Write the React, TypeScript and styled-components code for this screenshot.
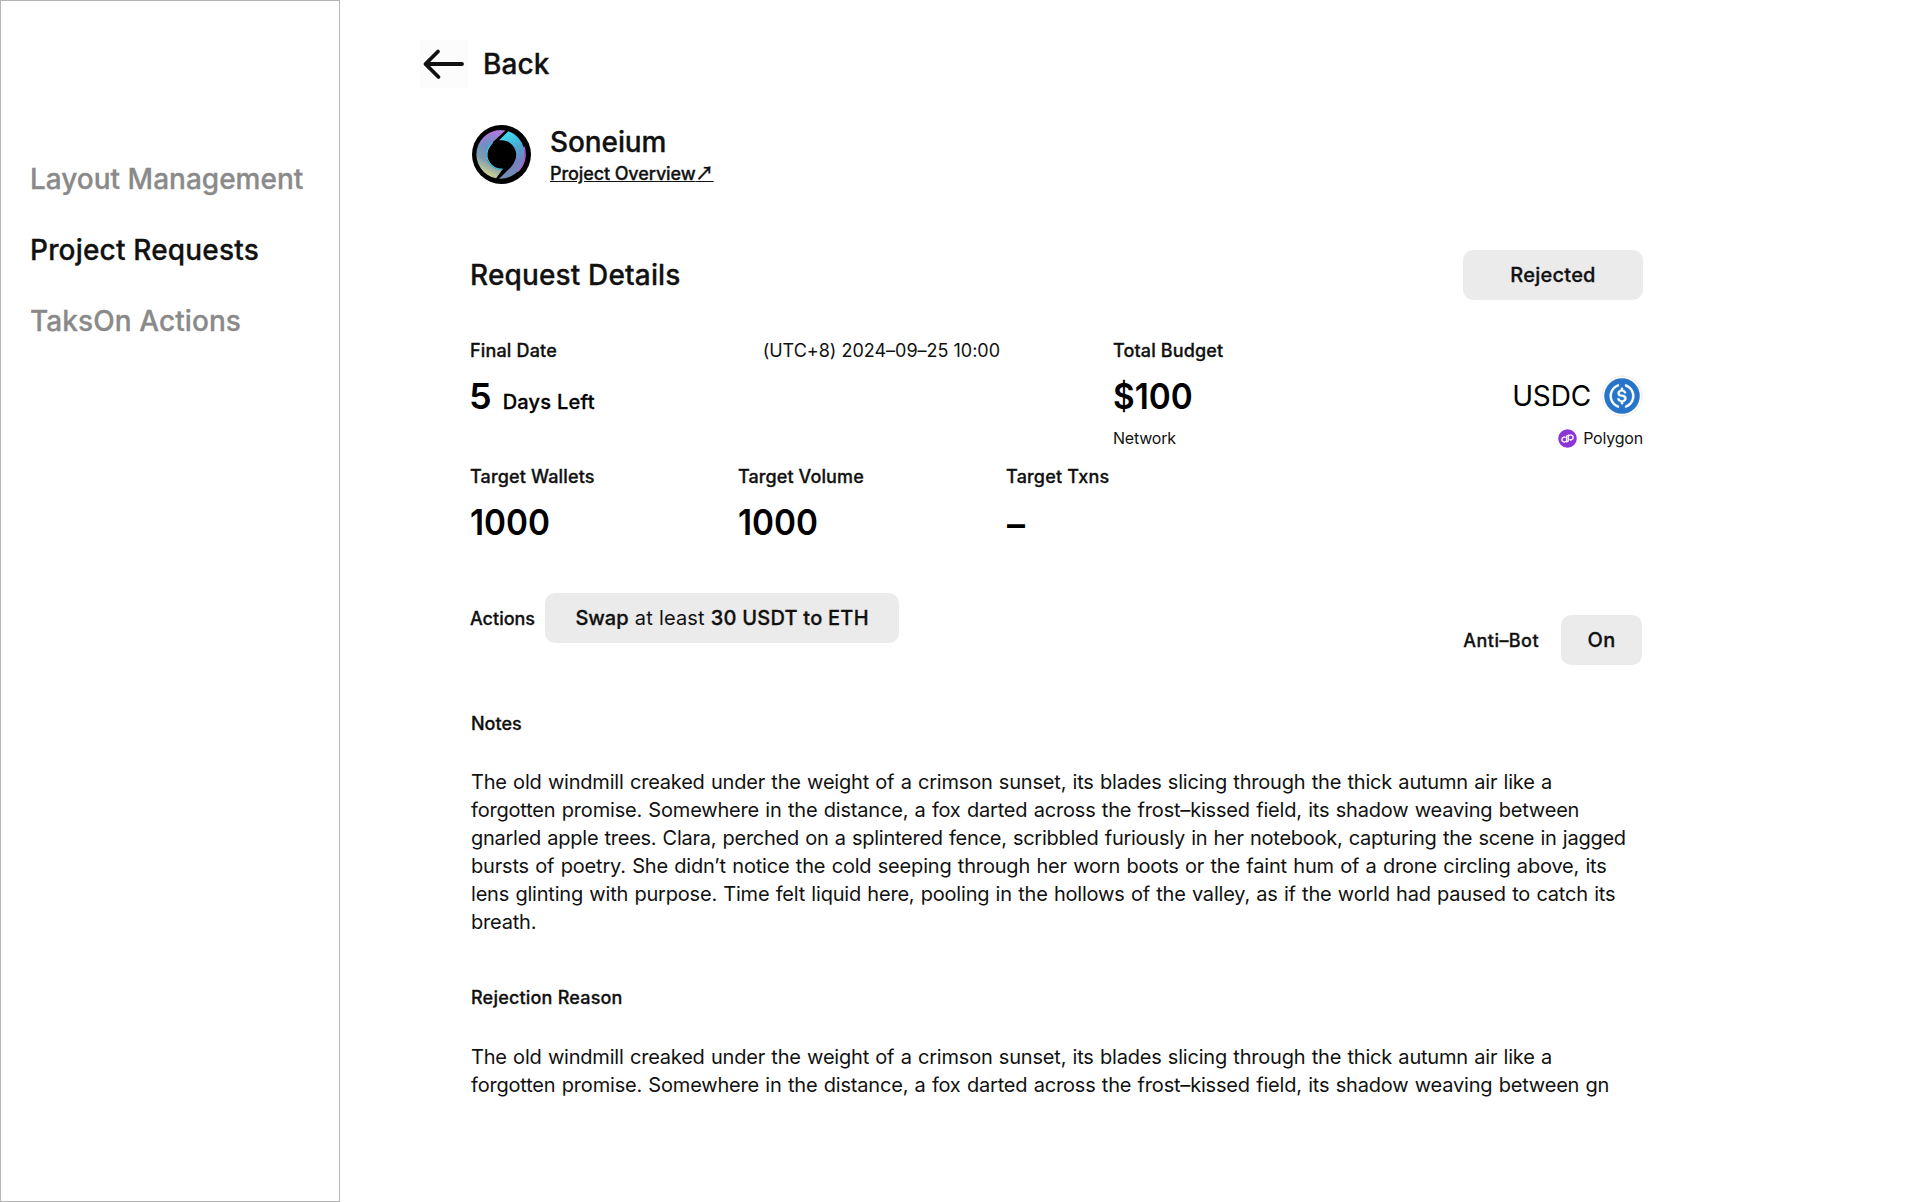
import React from 'react';
import styled, { createGlobalStyle, css } from 'styled-components';

const GlobalStyle = createGlobalStyle`
  * { box-sizing: border-box; }
  body { margin: 0; background: #fff; color: #111; font-family: Inter, "Liberation Sans", sans-serif; }
  h2, h3, p { margin: 0; }
`;

const medium = css`
  font-weight: 500;
  -webkit-text-stroke: 0.3px currentColor;
`;

interface Tracked {
  $track?: number;
}

const Page = styled.div`
  display: flex;
  min-height: 1202px;
`;

const Sidebar = styled.nav`
  width: 340px;
  flex: none;
  padding: 161px 0 0 29px;
  border: 1px solid #b5b5b5;
  display: flex;
  flex-direction: column;
  gap: 37px;
`;

const NavItem = styled.a<Tracked & { $active?: boolean }>`
  ${medium}
  align-self: flex-start;
  font-size: 28px;
  line-height: 34px;
  letter-spacing: ${(p) => p.$track ?? 0}px;
  color: ${(p) => (p.$active ? '#111' : '#8a8a8a')};
`;

const Main = styled.main`
  flex: 1;
  padding-top: 40px;
`;

const BackLink = styled.a`
  ${medium}
  display: flex;
  align-items: center;
  gap: 15px;
  margin-left: 80px;
  height: 48px;
  font-size: 28px;
  line-height: 34px;
  letter-spacing: 0.1px;
`;

const BackIcon = styled.svg`
  width: 48px;
  height: 48px;
  background: #fcfcfc;
`;

const Content = styled.section`
  width: 1173px;
  margin-left: 130px;
`;

const Project = styled.header`
  display: flex;
  gap: 18px;
  margin: 37px 0 0 2px;
`;

const ProjectText = styled.div`
  display: flex;
  flex-direction: column;
  align-items: flex-start;
  gap: 4px;
`;

const Heading = styled.h2<Tracked>`
  ${medium}
  font-size: 28px;
  line-height: 34px;
  letter-spacing: ${(p) => p.$track ?? 0}px;
`;

const OverviewLink = styled.a`
  ${medium}
  font-size: 18px;
  line-height: 22px;
  text-decoration: underline;
  letter-spacing: -0.1px;
`;

const Arrow = styled.span`
  font-family: "Noto Sans CJK SC", sans-serif;
  line-height: 1;
  letter-spacing: 0;
`;

const TitleRow = styled.div`
  display: flex;
  justify-content: space-between;
  align-items: center;
  margin-top: 65px;
`;

const Chip = styled.span<Tracked & { $width: number }>`
  ${medium}
  display: inline-flex;
  align-items: center;
  justify-content: center;
  width: ${(p) => p.$width}px;
  height: 50px;
  border-radius: 10px;
  background: #ebebeb;
  font-size: 20px;
  line-height: 24px;
  letter-spacing: ${(p) => p.$track ?? 0}px;
  white-space: pre;
`;

const ChipText = styled.span<Tracked & { $light?: boolean }>`
  letter-spacing: ${(p) => p.$track ?? 0}px;
  ${(p) =>
    p.$light &&
    css`
      font-weight: 400;
      word-spacing: 0.5px;
      -webkit-text-stroke: 0;
    `}
`;

const Summary = styled.div`
  display: grid;
  grid-template-columns: 530px 530px;
  column-gap: 113px;
  margin-top: 40px;
`;

const Spread = styled.div`
  display: flex;
  justify-content: space-between;
  align-items: center;
`;

const Label = styled.h3<Tracked>`
  ${medium}
  font-size: 18px;
  line-height: 22px;
  letter-spacing: ${(p) => p.$track ?? 0}px;
`;

/* Label set beside a chip, sharing its text baseline */
const SideLabel = styled(Label)`
  padding-top: 2px;
`;

const DateText = styled.span`
  font-size: 18px;
  line-height: 22px;
  letter-spacing: -0.01px;
`;

const ValueRow = styled(Spread)`
  margin-top: 12px;
  height: 44px;
`;

const Value = styled.div<{ $condensed?: boolean }>`
  font-size: 36px;
  line-height: 44px;
  font-weight: 600;
  color: #000;
  ${(p) =>
    p.$condensed &&
    css`
      transform: scaleX(0.926);
      transform-origin: left;
    `}
`;

const Countdown = styled.div`
  display: flex;
  align-items: baseline;
  gap: 10px;
  margin-left: -1px;
`;

const Unit = styled.span`
  ${medium}
  margin-left: 1px;
  font-size: 20px;
  line-height: 24px;
  letter-spacing: 0.25px;
  color: #000;
`;

const Token = styled.div`
  display: flex;
  align-items: center;
  gap: 10px;
  font-size: 28px;
  line-height: 34px;
  color: #000;
  letter-spacing: -0.15px;
`;

const NetworkRow = styled(Spread)`
  margin-top: 10px;
  font-size: 16px;
  line-height: 20px;
  letter-spacing: -0.2px;
`;

const Network = styled.span`
  display: flex;
  align-items: center;
  gap: 6px;
`;

const Targets = styled.div`
  display: grid;
  grid-template-columns: repeat(3, 268px);
  margin-top: 18px;
`;

const TargetValue = styled(Value)<{ $empty?: boolean }>`
  padding: ${(p) => (p.$empty ? '2px 0 0 1px' : '0')};
  height: 44px;
  margin-top: 12px;
`;

const ActionRow = styled.div`
  display: flex;
  justify-content: space-between;
  align-items: flex-start;
  margin-top: 49px;
  padding-right: 1px;
`;

const Inline = styled.div<{ $gap: number; $drop?: number }>`
  display: flex;
  align-items: center;
  gap: ${(p) => p.$gap}px;
  margin-top: ${(p) => p.$drop ?? 0}px;
`;

const TextBlock = styled.article<{ $top: number }>`
  margin-top: ${(p) => p.$top}px;
  padding-left: 1px;
`;

const Paragraph = styled.p<{ $top: number }>`
  margin-top: ${(p) => p.$top}px;
  font-size: 20px;
  line-height: 28px;
  word-spacing: 0.88px;
  white-space: nowrap;
`;

const Line = styled.span<Tracked>`
  display: block;
  letter-spacing: ${(p) => p.$track ?? 0}px;
`;

const Logo = () => (
  <svg width="60" height="60" viewBox="0.5 0.5 60 60">
    <defs>
      <linearGradient id="ringLeft" x1="0.6" y1="0" x2="0.3" y2="1">
        <stop offset="0" stopColor="#a77fd8" />
        <stop offset="0.35" stopColor="#6a8fc4" />
        <stop offset="0.65" stopColor="#7f9cae" />
        <stop offset="1" stopColor="#e6e38a" />
      </linearGradient>
      <linearGradient id="ringRight" x1="0.2" y1="0" x2="0.5" y2="1">
        <stop offset="0" stopColor="#3fe3f5" />
        <stop offset="0.45" stopColor="#4aa6d0" />
        <stop offset="0.75" stopColor="#7780c0" />
        <stop offset="1" stopColor="#6f93b0" />
      </linearGradient>
    </defs>
    <circle cx="30" cy="30" r="29.5" fill="#000" />
    <g transform="translate(0.7 0.7) scale(0.977)">
      <path d="M34 5.300A25 25 0 0 0 24.500 54.400L31 45.300A15 15 0 0 1 15.800 25Q17.500 21 21 17.500Z" fill="url(#ringLeft)" />
      <path d="M31 45A15 15 0 0 1 16 25Q17.500 21 21 17.500" fill="none" stroke="#45c8ea" strokeWidth="1.200" />
      <path d="M8.500 20A24.500 24.500 0 0 1 26 6" fill="none" stroke="#c86ae0" strokeWidth="1.200" />
      <path d="M37 6.200A25 25 0 0 1 27.500 54.800L40 42.500Q43.500 38 44.500 34A15 15 0 0 0 27.500 15.500Z" fill="url(#ringRight)" />
      <path d="M53 22A24.500 24.500 0 0 1 46.500 47.500" fill="none" stroke="#c65ad8" strokeWidth="1.300" />
    </g>
  </svg>
);

const Usdc = () => (
  <svg width="42" height="42" viewBox="0 0 42 42">
    <circle cx="21" cy="21" r="20" fill="#fff" stroke="#ececec" />
    <g transform="translate(3 3) scale(1.125)">
      <circle cx="16" cy="16" r="15.800" fill="#2775ca" />
      <g fill="#fff" stroke="#fff" strokeWidth="0.300">
        <path d="M20.022 18.124c0-2.124-1.280-2.852-3.840-3.156-1.828-.243-2.193-.728-2.193-1.578 0-.850.610-1.396 1.828-1.396 1.097 0 1.707.364 2.011 1.275a.458.458 0 00.427.303h.975a.416.416 0 00.427-.425v-.060a3.040 3.040 0 00-2.743-2.489V9.142c0-.243-.183-.425-.487-.486h-.915c-.243 0-.426.182-.487.486v1.396c-1.829.242-2.986 1.456-2.986 2.974 0 2.002 1.218 2.791 3.778 3.095 1.707.303 2.255.668 2.255 1.639 0 .970-.853 1.638-2.011 1.638-1.585 0-2.133-.667-2.316-1.578-.060-.242-.244-.364-.427-.364h-1.036a.416.416 0 00-.426.425v.060c.243 1.518 1.219 2.610 3.230 2.914v1.457c0 .242.183.425.487.485h.915c.243 0 .426-.182.487-.485V21.340c1.829-.303 3.047-1.578 3.047-3.217z" />
        <path d="M12.892 24.497c-4.754-1.700-7.192-6.980-5.424-11.653.914-2.550 2.925-4.491 5.424-5.402.244-.121.365-.303.365-.607v-.850c0-.242-.121-.424-.365-.485-.061 0-.183 0-.244.060a10.895 10.895 0 00-7.130 13.717c1.096 3.400 3.717 6.010 7.130 7.102.244.121.488 0 .548-.243.061-.060.061-.122.061-.243v-.850c0-.182-.182-.424-.365-.546zm6.460-18.936c-.244-.122-.488 0-.548.242-.061.061-.061.122-.061.243v.850c0 .243.182.485.365.607 4.754 1.700 7.192 6.980 5.424 11.653-.914 2.550-2.925 4.491-5.424 5.402-.244.121-.365.303-.365.607v.850c0 .242.121.424.365.485.061 0 .183 0 .244-.060a10.895 10.895 0 007.130-13.717c-1.096-3.460-3.778-6.070-7.130-7.162z" />
      </g>
    </g>
  </svg>
);

const Polygon = () => (
  <svg width="19" height="19" viewBox="0 0 19 19">
    <circle cx="9.500" cy="9.500" r="9.300" fill="#8a35d6" />
    <g fill="none" stroke="#fff" strokeWidth="1.300" strokeLinejoin="round">
      <path d="M7.600 8.600L6.300 7.900L4 9.200V11.900L6.300 13.200L8.700 11.900V7.100L11 5.800" />
      <path d="M11.400 10.400L12.700 11.100L15 9.800V7.100L12.700 5.800L10.300 7.100V11.900L8 13.200" />
    </g>
  </svg>
);

interface TextLine {
  text: string;
  track: number;
}

const OPENING: TextLine = {
  text: 'The old windmill creaked under the weight of a crimson sunset, its blades slicing through the thick autumn air like a ',
  track: -0.2,
};

const SECOND =
  'forgotten promise. Somewhere in the distance, a fox darted across the frost–kissed field, its shadow weaving between ';

const NOTES: TextLine[] = [
  OPENING,
  { text: SECOND, track: -0.188 },
  { text: 'gnarled apple trees. Clara, perched on a splintered fence, scribbled furiously in her notebook, capturing the scene in jagged ', track: -0.258 },
  { text: 'bursts of poetry. She didn’t notice the cold seeping through her worn boots or the faint hum of a drone circling above, its ', track: -0.18 },
  { text: 'lens glinting with purpose. Time felt liquid here, pooling in the hollows of the valley, as if the world had paused to catch its ', track: -0.2 },
  { text: 'breath.', track: -0.2 },
];

const REASON: TextLine[] = [OPENING, { text: `${SECOND}gn`, track: -0.188 }];

const Prose = ({ lines, top }: { lines: TextLine[]; top: number }) => (
  <Paragraph $top={top}>
    {lines.map((line) => (
      <Line key={line.text} $track={line.track}>{line.text}</Line>
    ))}
  </Paragraph>
);

export default function App() {
  return (
    <>
      <GlobalStyle />
      <Page>
        <Sidebar>
          <NavItem>Layout Management</NavItem>
          <NavItem $track={0.18} $active>Project Requests</NavItem>
          <NavItem $track={0.08}>TaksOn Actions</NavItem>
        </Sidebar>
        <Main>
          <BackLink>
            <BackIcon viewBox="0 0 48 48">
              <path d="M18 11.500L5.500 24L18.500 37M5.500 24H42" fill="none" stroke="#111" strokeWidth="3.800" strokeLinecap="round" strokeLinejoin="round" />
            </BackIcon>
            Back
          </BackLink>
          <Content>
            <Project>
              <Logo />
              <ProjectText>
                <Heading $track={-0.1}>Soneium</Heading>
                <OverviewLink>Project Overview<Arrow>↗</Arrow></OverviewLink>
              </ProjectText>
            </Project>
            <TitleRow>
              <Heading $track={0.15}>Request Details</Heading>
              <Chip $width={180} $track={0.25}>Rejected</Chip>
            </TitleRow>
            <Summary>
              <div>
                <Spread>
                  <Label $track={0.17}>Final Date</Label>
                  <DateText>(UTC+8) 2024–09–25 10:00</DateText>
                </Spread>
                <ValueRow>
                  <Countdown>
                    <Value>5</Value>
                    <Unit>Days Left</Unit>
                  </Countdown>
                </ValueRow>
              </div>
              <div>
                <Label $track={0.14}>Total Budget</Label>
                <ValueRow>
                  <Value $condensed>$100</Value>
                  <Token>USDC<Usdc /></Token>
                </ValueRow>
                <NetworkRow>
                  <span>Network</span>
                  <Network><Polygon />Polygon</Network>
                </NetworkRow>
              </div>
            </Summary>
            <Targets>
              <div><Label $track={0.15}>Target Wallets</Label><TargetValue $condensed>1000</TargetValue></div>
              <div><Label $track={0.1}>Target Volume</Label><TargetValue $condensed>1000</TargetValue></div>
              <div><Label $track={0.2}>Target Txns</Label><TargetValue $empty>–</TargetValue></div>
            </Targets>
            <ActionRow>
              <Inline $gap={10}>
                <SideLabel>Actions</SideLabel>
                <Chip $width={354}>
                  <ChipText>Swap</ChipText>
                  <ChipText $light $track={0.1}> at least </ChipText>
                  <ChipText $track={0.23}>30 USDT to ETH</ChipText>
                </Chip>
              </Inline>
              <Inline $gap={22} $drop={22}>
                <SideLabel $track={0.45}>Anti–Bot</SideLabel>
                <Chip $width={81} $track={0.3}>On</Chip>
              </Inline>
            </ActionRow>
            <TextBlock $top={48}>
              <Label>Notes</Label>
              <Prose lines={NOTES} top={33} />
            </TextBlock>
            <TextBlock $top={51}>
              <Label $track={0.2}>Rejection Reason</Label>
              <Prose lines={REASON} top={34} />
            </TextBlock>
          </Content>
        </Main>
      </Page>
    </>
  );
}
